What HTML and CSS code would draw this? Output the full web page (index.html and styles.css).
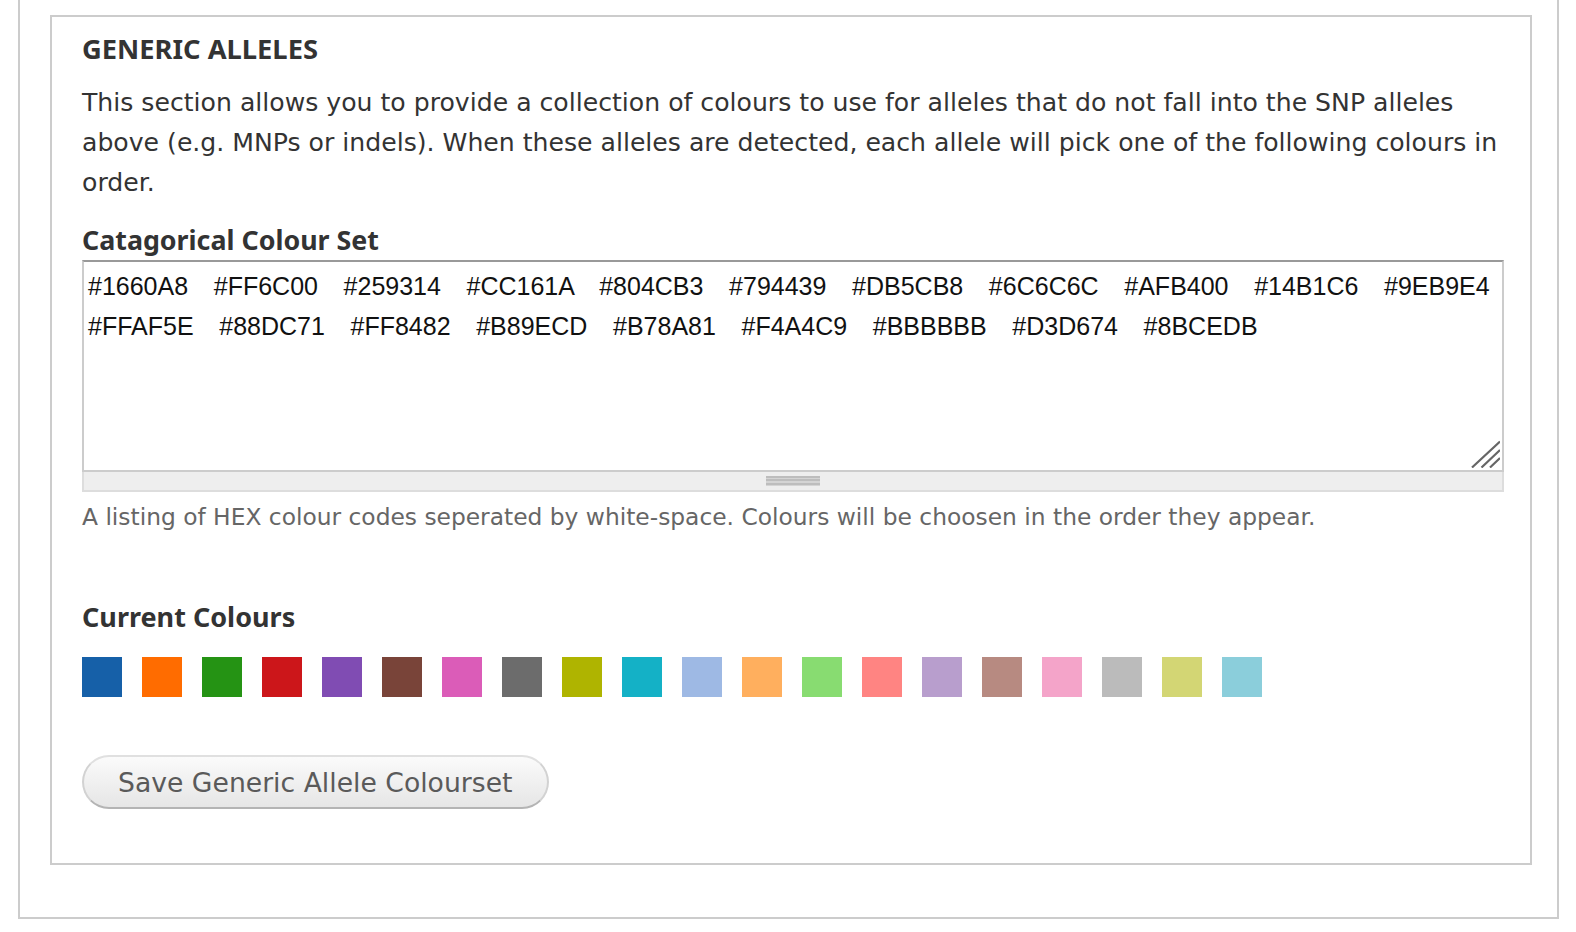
FILE: index.html
```html
<!DOCTYPE html>
<html lang="en">
<head>
<meta charset="utf-8">
<title>Generic Alleles</title>
<link rel="stylesheet" href="styles.css">
</head>
<body>
<div class="page">
  <section class="fieldset">
    <h2 class="legend">GENERIC ALLELES</h2>
    <p class="intro">This section allows you to provide a collection of colours to use for alleles that do not fall into the SNP alleles above (e.g. MNPs or indels). When these alleles are detected, each allele will pick one of the following colours in order.</p>
    <label class="label" for="colourset">Catagorical Colour Set</label>
    <div class="resizable">
      <textarea id="colourset" class="textarea" spellcheck="false">#1660A8   #FF6C00   #259314   #CC161A   #804CB3   #794439   #DB5CB8   #6C6C6C   #AFB400   #14B1C6   #9EB9E4   #FFAF5E   #88DC71   #FF8482   #B89ECD   #B78A81   #F4A4C9   #BBBBBB   #D3D674   #8BCEDB</textarea>
      <div class="grippie"><span class="grip-lines"></span></div>
      <svg class="resizer" width="30" height="30" viewBox="0 0 30 30" aria-hidden="true">
        <path d="M2 29.5 L30 3.5 M11.5 29.5 L30 12 M20 29.5 L30 20" stroke="#666" stroke-width="2.2" fill="none"/>
      </svg>
    </div>
    <div class="description">A listing of HEX colour codes seperated by white-space. Colours will be choosen in the order they appear.</div>
    <h3 class="label current">Current Colours</h3>
    <div class="swatches">
      <span class="swatch" style="background:#1660A8"></span>
      <span class="swatch" style="background:#FF6C00"></span>
      <span class="swatch" style="background:#259314"></span>
      <span class="swatch" style="background:#CC161A"></span>
      <span class="swatch" style="background:#804CB3"></span>
      <span class="swatch" style="background:#794439"></span>
      <span class="swatch" style="background:#DB5CB8"></span>
      <span class="swatch" style="background:#6C6C6C"></span>
      <span class="swatch" style="background:#AFB400"></span>
      <span class="swatch" style="background:#14B1C6"></span>
      <span class="swatch" style="background:#9EB9E4"></span>
      <span class="swatch" style="background:#FFAF5E"></span>
      <span class="swatch" style="background:#88DC71"></span>
      <span class="swatch" style="background:#FF8482"></span>
      <span class="swatch" style="background:#B89ECD"></span>
      <span class="swatch" style="background:#B78A81"></span>
      <span class="swatch" style="background:#F4A4C9"></span>
      <span class="swatch" style="background:#BBBBBB"></span>
      <span class="swatch" style="background:#D3D674"></span>
      <span class="swatch" style="background:#8BCEDB"></span>
    </div>
    <button class="button" type="button">Save Generic Allele Colourset</button>
  </section>
</div>
</body>
</html>
```
FILE: styles.css
```css
html, body {
  margin: 0;
  padding: 0;
  background: #fff;
}

body {
  font-family: "DejaVu Sans", "Noto Sans", sans-serif;
  color: #333;
}

.page {
  box-sizing: border-box;
  width: 1541px;
  margin-left: 18px;
  border: 2px solid #ccc;
  border-top: none;
  padding: 15px 0 52px 30px;
}

.fieldset {
  box-sizing: border-box;
  width: 1482px;
  border: 2px solid #ccc;
  padding: 12px 18px 54px 30px;
}

.legend {
  margin: 0;
  font-family: "Noto Sans", sans-serif;
  font-weight: bold;
  font-size: 27.3px;
  line-height: 40px;
  color: #333;
}

.intro {
  margin: 14px 0 0;
  font-size: 25.15px;
  line-height: 40px;
}

.label {
  display: block;
  margin: 17px 0 0;
  font-family: "Noto Sans", sans-serif;
  font-weight: bold;
  font-size: 26.8px;
  line-height: 40px;
  color: #333;
}

.resizable {
  position: relative;
  width: 1422px;
}

.textarea {
  display: block;
  box-sizing: border-box;
  width: 100%;
  height: 212px;
  margin: 0;
  padding: 4px;
  border: 2px solid #ccc;
  border-top-color: #999;
  font-family: "Liberation Sans", Arial, sans-serif;
  font-size: 25px;
  line-height: 40px;
  word-spacing: 1.6px;
  color: #111;
  resize: none;
  overflow: hidden;
  outline: none;
}

.grippie {
  box-sizing: border-box;
  height: 20px;
  background: #eee;
  border: 2px solid #ddd;
  border-top: none;
  display: flex;
  justify-content: center;
  padding-top: 4px;
}

.grip-lines {
  width: 54px;
  height: 10px;
  background: repeating-linear-gradient(180deg, #bdbdbd 0 2px, #d4d4d4 2px 3.4px);
}

.resizer {
  position: absolute;
  right: 4px;
  bottom: 24px;
}

.description {
  margin-top: 7px;
  font-size: 23.35px;
  line-height: 36px;
  color: #666;
}

.current {
  margin: 62px 0 0;
  font-size: 27px;
}

.swatches {
  display: flex;
  gap: 20px;
  margin-top: 20px;
}

.swatch {
  width: 40px;
  height: 40px;
}

.button {
  display: block;
  box-sizing: border-box;
  height: 54px;
  margin-top: 58px;
  padding: 2px 35px 0 34px;
  border: 2px solid #e0e0e0;
  border-bottom-color: #b4b4b4;
  border-left-color: #d2d2d2;
  border-right-color: #d2d2d2;
  border-radius: 27px;
  background: linear-gradient(180deg, #fbfbfb 0%, #f0f0f0 50%, #e6e6e6 100%);
  font-family: "DejaVu Sans", sans-serif;
  font-size: 26.65px;
  line-height: 48px;
  color: #5a5a5a;
  cursor: pointer;
}
```
